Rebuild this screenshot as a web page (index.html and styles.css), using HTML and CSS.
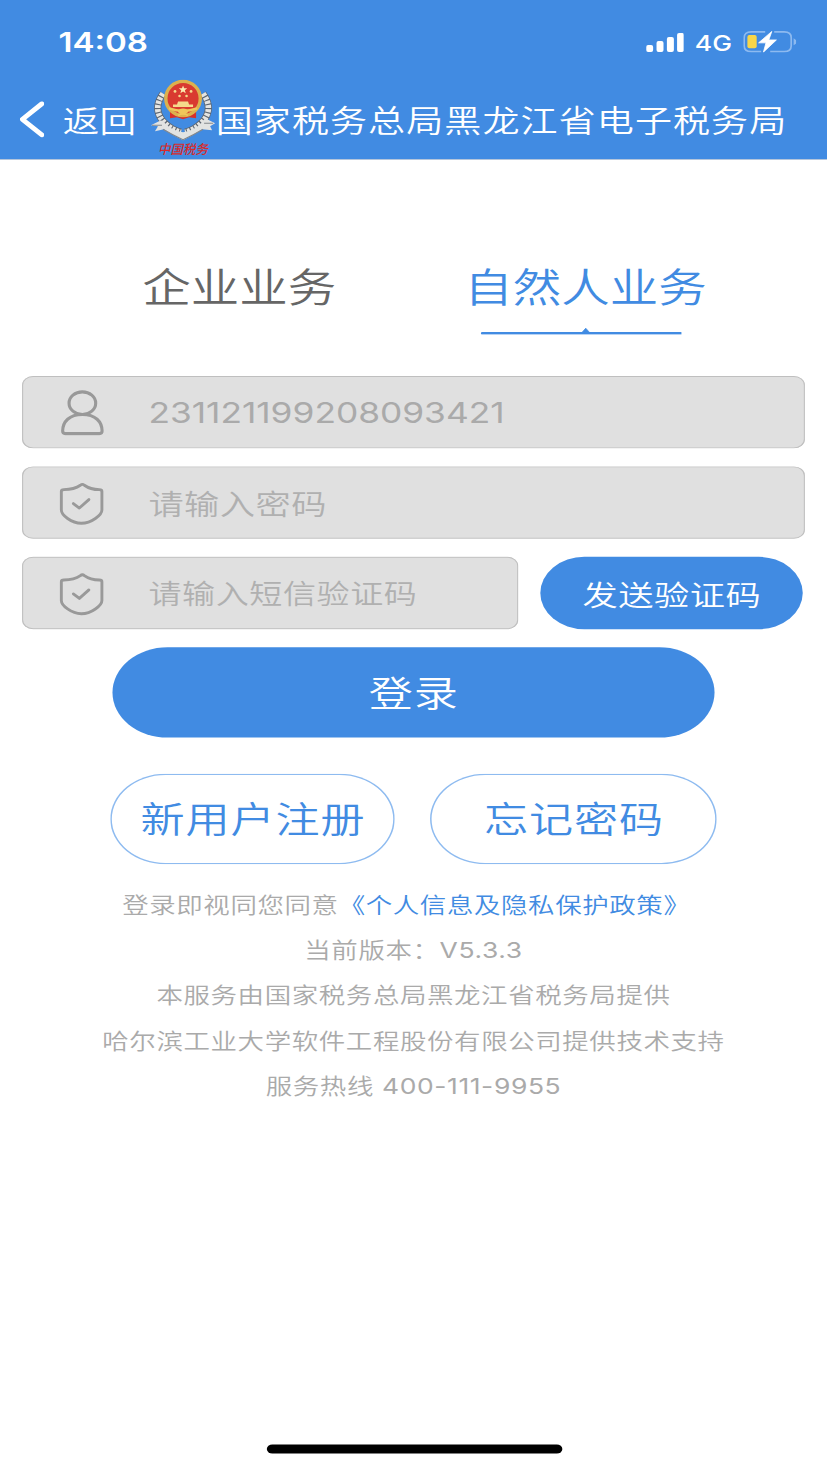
FILE: index.html
```html
<!DOCTYPE html>
<html lang="zh-CN">
<head>
    <meta charset="UTF-8">
    <title>黑龙江省电子税务局</title>
    <link rel="stylesheet" href="styles.css">
</head>
<body>

<div class="screen">
    <header class="header">
        <div class="status">
            <span class="time">14:08</span>
            <svg class="signal" viewBox="0 0 38 20" preserveAspectRatio="none" fill="#fff">
                <rect x="0" y="12.5" width="7" height="7" rx="2"/>
                <rect x="10.4" y="8.5" width="7" height="11" rx="2"/>
                <rect x="20.8" y="4.5" width="7" height="15" rx="2"/>
                <rect x="31" y="0.5" width="7" height="19" rx="2"/>
            </svg>
            <span class="network">4G</span>
            <svg class="battery" viewBox="0 0 54 22" preserveAspectRatio="none">
                <path d="M22 1.2H8Q1 1.2 1 7V15Q1 20.8 8 20.8H18M27 20.8H41Q48 20.8 48 15V7Q48 1.2 41 1.2H31" fill="none" stroke="#8dbaf0" stroke-width="1.7"/>
                <path d="M50.4 7.5Q53.5 9 53.5 11T50.4 14.5Z" fill="#8dbaf0"/>
                <rect x="4.2" y="4.3" width="9.3" height="13.2" rx="2" fill="#f8d648"/>
                <path d="M28.6 0.7L15.4 12.1H22.8L20.2 21.4L33.2 9.2H25.6Z" fill="#fff" stroke="#fff" stroke-width="0.8" stroke-linejoin="round"/>
            </svg>
        </div>
        <div class="nav">
            <a class="back" href="#">
                <svg class="arrow" viewBox="0 0 24 36" preserveAspectRatio="none">
                    <path d="M22 2.5L2.5 18L22 33.5" fill="none" stroke="#fff" stroke-width="4.8" stroke-linecap="round" stroke-linejoin="round"/>
                </svg>
                <span>返回</span>
            </a>
            <svg class="emblem" viewBox="0 0 66 80" preserveAspectRatio="none">
                <!-- wheat wreath -->
                <path d="M13 14Q2 30 14 43Q22 51 31 53" fill="none" stroke="#5d6671" stroke-width="7"/>
                <path d="M53 14Q64 30 52 43Q44 51 35 53" fill="none" stroke="#5d6671" stroke-width="7"/>
                <path d="M13 14Q2 30 14 43Q22 51 31 53" fill="none" stroke="#e4e4e2" stroke-width="5.6" stroke-dasharray="3 1.2"/>
                <path d="M53 14Q64 30 52 43Q44 51 35 53" fill="none" stroke="#e4e4e2" stroke-width="5.6" stroke-dasharray="3 1.2"/>
                <!-- national emblem -->
                <path d="M20 30H46V39L39 38L33 40L27 38L20 39Z" fill="#d8302a"/>
                <ellipse cx="33" cy="19" rx="17.2" ry="17.2" fill="#d93a30" stroke="#dcb14e" stroke-width="3.4"/>
                <path d="M33 6L34.1 8.8H37.2L34.8 10.7L35.7 13.7L33 11.9L30.3 13.7L31.2 10.7L28.8 8.8H31.9Z" fill="#fbeab0"/>
                <g fill="#f5d98b">
                    <circle cx="25" cy="12" r="1.4"/>
                    <circle cx="41" cy="12" r="1.4"/>
                    <circle cx="29.5" cy="16.5" r="1.3"/>
                    <circle cx="36.5" cy="16.5" r="1.3"/>
                    <path d="M28 22H38L39 25H43V27.5H23V25H27Z"/>
                </g>
                <path d="M19 29Q33 34 47 29" fill="none" stroke="#efc75b" stroke-width="2.2"/>
                <ellipse cx="33" cy="32" rx="5" ry="3" fill="#efc75b"/>
                <path d="M28 36Q33 33 38 36" fill="none" stroke="#efc75b" stroke-width="1.6"/>
                <!-- ribbon -->
                <path d="M1 46L11 41L15 44Q21 51 33 53Q45 51 51 44L55 39L65 44L60 47L62 51L52 50Q43 56 33 61Q23 56 14 50L5 52L8 47Z" fill="#e2e3e2"/>
                <path d="M13 50Q23 56 33 60.5Q43 56 53 50M2 46L12 46M54 44L63 44" fill="none" stroke="#85898d" stroke-width="1.1"/>
                <text x="8" y="75" class="emblem-text" textLength="50" lengthAdjust="spacingAndGlyphs">中国税务</text>
            </svg>
            <h1 class="title">国家税务总局黑龙江省电子税务局</h1>
        </div>
    </header>

    <div class="tabs">
        <a class="tab" href="#">企业业务</a>
        <a class="tab active" href="#">自然人业务
            <svg class="tab-line" viewBox="0 0 202 8" preserveAspectRatio="none">
                <path d="M1.5 6.3H200.5" stroke="#418be2" stroke-width="2.8" stroke-linecap="round"/>
                <path d="M101 5.5L105 1L109 5.5Z" fill="#418be2" stroke="#418be2" stroke-width="0.8"/>
            </svg>
        </a>
    </div>

    <form class="login-form">
        <div class="field">
            <svg class="icon" viewBox="0 0 48 48" preserveAspectRatio="none" fill="none" stroke="#999" stroke-width="3.1" stroke-linejoin="round">
                <ellipse cx="25" cy="14.5" rx="13.3" ry="11.3"/>
                <path d="M25 25.8C12 25.8 5.3 33 5.3 42.5Q5.3 45 8 45H42Q44.7 45 44.7 42.5C44.7 33 38 25.8 25 25.8Z"/>
            </svg>
            <input class="number" type="text" value="231121199208093421">
        </div>
        <div class="field">
            <svg class="icon" viewBox="0 0 48 48" preserveAspectRatio="none" fill="none" stroke="#999" stroke-width="2.9" stroke-linecap="round" stroke-linejoin="round">
                <path d="M25 5.3Q24 5.3 23 6.2Q17 10.4 6.5 10.6Q4 10.6 4 12.4V31C4 36 14 44.3 24 44.3S44.5 36 44.5 31V12.4Q44.5 10.6 42 10.6Q33 10.6 27 6.2Q26 5.3 25 5.3Z"/>
                <path d="M16 24.5L22 29L31.5 20.5"/>
            </svg>
            <input type="text" placeholder="请输入密码">
        </div>
        <div class="code-row">
            <div class="field">
                <svg class="icon" viewBox="0 0 48 48" preserveAspectRatio="none" fill="none" stroke="#999" stroke-width="2.9" stroke-linecap="round" stroke-linejoin="round">
                    <path d="M25 5.3Q24 5.3 23 6.2Q17 10.4 6.5 10.6Q4 10.6 4 12.4V31C4 36 14 44.3 24 44.3S44.5 36 44.5 31V12.4Q44.5 10.6 42 10.6Q33 10.6 27 6.2Q26 5.3 25 5.3Z"/>
                    <path d="M16 24.5L22 29L31.5 20.5"/>
                </svg>
                <input class="sms" type="text" placeholder="请输入短信验证码">
            </div>
            <button type="button" class="send">发送验证码</button>
        </div>
        <button type="button" class="login">登录</button>
        <div class="links">
            <button type="button" class="outline">新用户注册</button>
            <button type="button" class="outline">忘记密码</button>
        </div>
    </form>

    <div class="info">
        <p class="agree">登录即视同您同意<a href="#">《个人信息及隐私保护政策》</a></p>
        <p>当前版本：<span class="latin">V5.3.3</span></p>
        <p>本服务由国家税务总局黑龙江省税务局提供</p>
        <p>哈尔滨工业大学软件工程股份有限公司提供技术支持</p>
        <p>服务热线 <span class="latin">400-111-9955</span></p>
    </div>

    <div class="home-bar"></div>
</div>

</body>
</html>
```
FILE: styles.css
```css
* {
    box-sizing: border-box;
}
body {
    margin: 0;
    width: 827px;
    height: 1468px;
    overflow: hidden;
    background: #fff;
    font-family: Inter, "Noto Sans CJK SC", sans-serif;
}
a {
    color: inherit;
    text-decoration: none;
}
/* 375x812 layout stretched to fill the window */
.screen {
    display: flex;
    flex-direction: column;
    width: 375px;
    height: 812px;
    transform: scale(2.2053, 1.8079);
    transform-origin: 0 0;
    font-weight: 350;
}
.header {
    height: 88px;
    background: #418be2;
    box-shadow: 0 0.4px 0 #b5c3d4;
    color: #fff;
}
.status {
    display: flex;
    align-items: center;
    height: 44px;
    padding: 2px 13.8px 0 26.5px;
}
.time {
    flex: 1;
    font-size: 15px;
    font-weight: 600;
}
.signal {
    width: 17.2px;
    height: 11px;
}
.network {
    margin: 0 4.8px 0 4.6px;
    font-size: 12px;
    font-weight: 450;
}
.battery {
    width: 24.5px;
    height: 12.2px;
}
.nav {
    display: flex;
    align-items: center;
    height: 44px;
    padding-left: 8.8px;
}
.back {
    display: flex;
    align-items: center;
    width: 59px;
    font-size: 16.6px;
    white-space: nowrap;
}
.back span {
    padding-bottom: 1px;
}
.arrow {
    width: 10.9px;
    height: 20px;
    margin-right: 8.8px;
}
.emblem {
    width: 30px;
    height: 44px;
}
.emblem-text {
    font-family: "Noto Sans CJK SC", sans-serif;
    font-size: 13px;
    font-style: italic;
    font-weight: 500;
    fill: #d82a2a;
}
.title {
    margin: 0;
    padding-bottom: 0.6px;
    font-size: 16.8px;
    font-weight: 350;
    letter-spacing: 0.5px;
    white-space: nowrap;
}
.tabs {
    display: flex;
    justify-content: space-between;
    height: 120px;
    padding: 54px 54.5px 0 64.5px;
}
.tab {
    display: flex;
    flex-direction: column;
    align-items: center;
    color: #666;
    font-size: 22px;
    line-height: 34px;
    white-space: nowrap;
}
.tab.active {
    color: #418be2;
}
.tab-line {
    width: 91.6px;
    height: 4.4px;
    margin: 4.5px 4.2px 0 0;
}
.login-form {
    display: flex;
    flex-direction: column;
    gap: 10px;
    padding: 0 10px;
}
.field {
    display: flex;
    align-items: center;
    height: 40px;
    padding-left: 16.3px;
    background: #e0e0e0;
    box-shadow: inset 0 0 0 0.5px #bfbfbf;
    border-radius: 5px;
}
.icon {
    flex: none;
    width: 21.8px;
    height: 26.5px;
}
.field input {
    flex: 1;
    min-width: 0;
    margin-left: 19.2px;
    padding: 1px 0 0;
    border: none;
    outline: none;
    background: none;
    color: #aaa;
    font-family: inherit;
    font-size: 16px;
    font-weight: 350;
    letter-spacing: 0.2px;
}
.field input.number {
    padding: 0;
    font-weight: 400;
    letter-spacing: 0;
}
.field input.sms {
    font-size: 15px;
    letter-spacing: 0.25px;
}
.field input::placeholder {
    color: #b0b0b0;
}
.code-row {
    display: flex;
    gap: 10.2px;
}
.code-row .field {
    width: 225px;
}
button {
    padding: 0;
    border: none;
    font-family: inherit;
    font-weight: 350;
}
.send {
    width: 119px;
    height: 40px;
    padding-bottom: 1px;
    border-radius: 22px;
    background: #418be2;
    color: #fff;
    font-size: 16px;
    letter-spacing: 0.2px;
}
.login {
    width: 273.3px;
    height: 50px;
    margin-left: 41px;
    padding-bottom: 1.6px;
    border-radius: 25px;
    background: #418be2;
    color: #fff;
    font-size: 20px;
    letter-spacing: 0.4px;
}
.links {
    display: flex;
    gap: 16px;
    margin: 9.7px 0 0 39.9px;
}
.outline {
    width: 129.6px;
    height: 50.4px;
    box-shadow: inset 0 0 0 0.7px #8ebbf0;
    border-radius: 25px;
    background: #fff;
    color: #418be2;
    font-size: 20px;
    letter-spacing: 0.4px;
}
.info {
    margin-top: 9.7px;
    color: #aaa;
    font-size: 12px;
    letter-spacing: 0.27px;
    line-height: 25px;
    text-align: center;
    white-space: nowrap;
}
.info p {
    margin: 0;
}
.latin {
    font-weight: 400;
}
.agree {
    padding-right: 6.5px;
}
.agree a {
    color: #418be2;
}
.home-bar {
    width: 134px;
    height: 5px;
    margin: auto auto 8px;
    border-radius: 3px;
    background: #000;
}
```
